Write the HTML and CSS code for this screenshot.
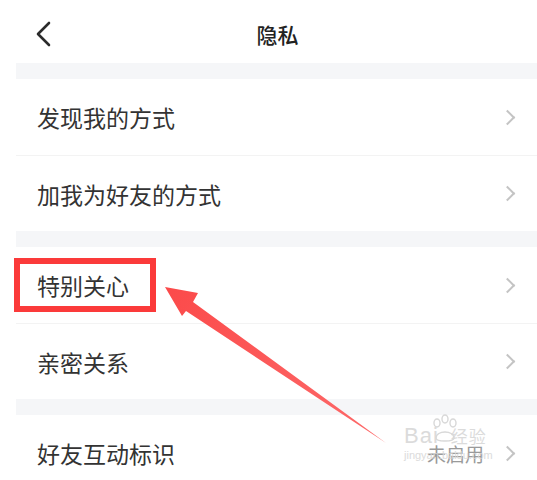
FILE: index.html
```html
<!doctype html>
<html lang="zh-CN">
<head>
    <meta charset="utf-8">
    <title>隐私</title>
    <link rel="stylesheet" href="styles.css">
</head>
<body>
    <div class="page">
        <div class="topbar">
            <svg class="back" width="16" height="26" viewBox="0 0 16 26">
                <polyline points="13,2 2,13 13,24" fill="none" stroke="#2b2b2b" stroke-width="2.6" stroke-linecap="round" stroke-linejoin="round"/>
            </svg>
            <div class="title">隐私</div>
        </div>

        <div class="gap"></div>
        <div class="group">
            <div class="row"><span class="label">发现我的方式</span><span class="arrow-r"></span></div>
            <div class="row"><span class="label">加我为好友的方式</span><span class="arrow-r"></span></div>
        </div>

        <div class="gap"></div>
        <div class="group">
            <div class="row"><span class="label">特别关心</span><span class="arrow-r"></span></div>
            <div class="row"><span class="label">亲密关系</span><span class="arrow-r"></span></div>
        </div>

        <div class="gap"></div>
        <div class="group">
            <div class="row"><span class="label">好友互动标识</span><span class="value">未启用</span><span class="arrow-r"></span></div>
        </div>

        <!-- annotation drawn over the screen -->
        <svg class="overlay" width="537" height="480" viewBox="0 0 537 480">
            <defs>
                <linearGradient id="ag" x1="165" y1="287" x2="385" y2="443" gradientUnits="userSpaceOnUse">
                    <stop offset="0" stop-color="#fb4a4a"/>
                    <stop offset="1" stop-color="#fd6b6b"/>
                </linearGradient>
            </defs>
            <rect x="17" y="261" width="136" height="48" fill="none" stroke="#fb3a3a" stroke-width="6"/>
            <polygon points="165,287 198,293 193,302 386,443 186,311 182,316" fill="url(#ag)"/>
        </svg>

        <div class="watermark">
            <svg class="paw" width="34" height="30" viewBox="0 0 34 30">
                <g fill="none" stroke="#d4d4d4" stroke-width="1.4">
                    <ellipse cx="9" cy="9" rx="3" ry="4"/>
                    <ellipse cx="17" cy="5" rx="3" ry="4"/>
                    <ellipse cx="25" cy="9" rx="3" ry="4"/>
                    <path d="M8 24 C8 16 26 16 26 24 C26 28 8 28 8 24 Z"/>
                </g>
            </svg>
            <div class="wm-top">Bai<span class="wm-cn">经验</span></div>
            <div class="wm-url">jingyan.baidu.com</div>
        </div>
    </div>
</body>
</html>
```

FILE: styles.css
```css
body {
    margin: 0;
    background: #fff;
    font-family: "Noto Sans CJK SC", "Noto Sans", sans-serif;
    color: #333;
}

.page {
    position: relative;
    width: 537px;
    height: 480px;
    overflow: hidden;
}

.topbar {
    height: 63px;
    display: flex;
    align-items: center;
    position: relative;
}

.back {
    margin-left: 36px;
    margin-top: 4px;
}

.title {
    position: absolute;
    left: 0;
    right: 0;
    top: 0;
    height: 68px;
    line-height: 68px;
    text-align: center;
    padding-left: 18px;
    font-size: 21px;
    font-weight: 500;
    color: #222;
    pointer-events: none;
}

.gap {
    height: 16px;
    margin-left: 16px;
    background: #f5f6f8;
}

.group {
    margin-left: 16px;
}

.row {
    height: 76px;
    display: flex;
    align-items: center;
    padding-left: 21px;
    padding-right: 22px;
    border-top: 1px solid #f3f3f3;
    box-sizing: border-box;
}

.row:first-child {
    border-top: 0;
}

.label {
    flex: 1;
    font-size: 23px;
    color: #333;
}

.value {
    font-size: 19px;
    color: #9a9a9a;
    margin-right: 18px;
}

.arrow-r {
    width: 9px;
    height: 9px;
    border-top: 2px solid #c4c4c4;
    border-right: 2px solid #c4c4c4;
    transform: rotate(45deg);
    margin-right: 2px;
}

.overlay {
    position: absolute;
    left: 0;
    top: 0;
}

.watermark {
    position: absolute;
    left: 404px;
    top: 424px;
    width: 90px;
    color: #d8d8d8;
    font-family: "Liberation Sans", sans-serif;
    opacity: 0.9;
}

.paw {
    position: absolute;
    left: 24px;
    top: -10px;
}

.wm-top {
    font-size: 22px;
    line-height: 24px;
    letter-spacing: 1px;
}

.wm-cn {
    font-family: "Noto Sans CJK SC", sans-serif;
    font-size: 17px;
    margin-left: 12px;
}

.wm-url {
    font-size: 11px;
    line-height: 14px;
}
```
